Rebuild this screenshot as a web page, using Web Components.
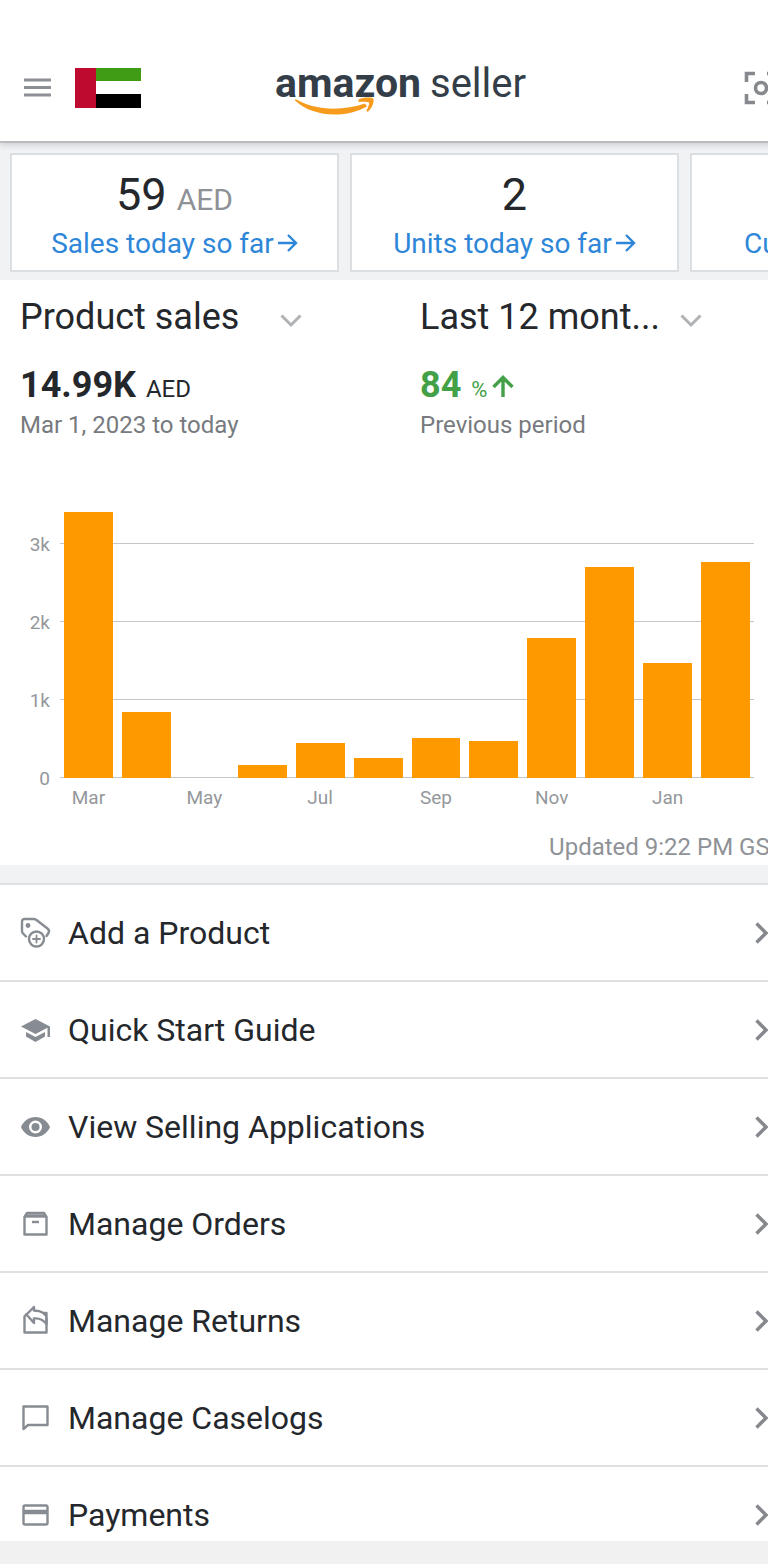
<!DOCTYPE html>
<html lang="en">
<head>
<meta charset="utf-8">
<meta name="viewport" content="width=device-width, initial-scale=1">
<title>Amazon Seller</title>
<style>
  html, body { margin: 0; height: 100%; }
  body { font-family: Roboto, "Liberation Sans", sans-serif; color: #24272b; background: #fff; overflow: hidden; }
</style>
</head>
<body>
<seller-app></seller-app>

<script>
function define(name, html, setup) {
  const template = document.createElement('template');
  template.innerHTML = html;
  customElements.define(name, class extends HTMLElement {
    constructor() {
      super();
      this.attachShadow({ mode: 'open' }).append(template.content.cloneNode(true));
    }
    connectedCallback() {
      if (setup && !this.ready) { this.ready = true; setup(this, this.shadowRoot); }
    }
  });
}

const ICONS = {
  tag: '<g fill="none" stroke="#878b92" stroke-width="2.400" stroke-linecap="round" stroke-linejoin="round"><path d="M6 19.500L3 16.500Q2 15.500 2 14V5Q2 2 5 2H13.500Q15 2 16.500 3L27.500 11.500Q30 13.500 28.500 16L26.500 19"/><circle cx="16.500" cy="22" r="7.500"/><path d="M16.500 18.500v7M13 22h7" stroke-width="1.800"/></g><circle cx="8" cy="8.500" r="2.400" fill="#878b92"/>',
  cap: '<g fill="#878b92"><path d="M15.500 5L1 12.500L15.500 20L27.500 13.800V23h2.500V12.500z"/><path d="M6 18v4.500L15.500 28L25 22.500V18l-9.500 5z"/></g>',
  eye: '<path fill="#878b92" fill-rule="evenodd" d="M15.500 6C9 6 3.500 10 1 16c2.500 6 8 10 14.500 10S27.500 22 30 16C27.500 10 22 6 15.500 6zm0 3.500a6.500 6.500 0 1 1 0 13a6.500 6.500 0 0 1 0-13z"/><circle cx="15.500" cy="16" r="4" fill="#878b92"/>',
  box: '<g fill="none" stroke="#878b92" stroke-width="2.400"><path d="M4.500 9v17.500h22V9L24 5H7z" stroke-linejoin="round"/><path d="M5 8h21" stroke-width="3.400"/><path d="M12 14h7"/></g>',
  returns: '<g fill="none" stroke="#878b92" stroke-width="2.400" stroke-linejoin="round"><path d="M7 8.500L4.500 11.500v16h22V13"/><path d="M14 2L6.500 9.500L14 18v-4.500c5-.500 9 1 12.500 5.500V8h-3c-3-2-5.500-2.500-9.500-2.500z"/></g><path d="M18 5.500l8.500 2.500v6c-2-4-5-6.500-8.500-8.500z" fill="#878b92"/>',
  chat: '<path d="M3.500 4.500h24v18.500H8l-4.500 4z" fill="none" stroke="#878b92" stroke-width="2.400" stroke-linejoin="round"/>',
  card: '<rect x="3.500" y="6.500" width="24" height="19" rx="1.500" fill="none" stroke="#878b92" stroke-width="2.400"/><path d="M3.500 13h24" stroke="#878b92" stroke-width="4.500"/>'
};

define('amazon-logo', `
  <style>
    :host { display: block; width: 252px; height: 64px; }
    svg { display: block; width: 100%; height: 100%; }
    text { font-family: Roboto, sans-serif; fill: #333e48; }
  </style>
  <svg viewBox="0 0 252 64" role="img" aria-label="amazon seller">
    <text x="0" y="41" font-size="41" font-weight="700">amazon</text>
    <text x="155" y="41" font-size="40">seller</text>
    <path d="M20.500 43C40 55 68 55 90 47.500L92 50.500C71 62.500 38 61.500 20 44.500z" fill="#f79b1c"/>
    <path d="M83.500 43.500C89 41 97.500 41 98.500 43C99 47.500 96.500 53 92.500 56L91.500 54.500C93.500 51 94.500 47.500 94 46.500C92.500 45.500 88 45.500 83.500 46z" fill="#f79b1c"/>
  </svg>`);

define('app-header', `
  <style>
    :host { display: block; position: relative; background: #fff; border-bottom: 2px solid #b9bbbd; box-shadow: 0 2px 6px rgba(60, 70, 80, .2); }
    header { display: grid; grid-template-columns: 1fr auto 1fr; align-items: center; padding: 56px 22px 21px 23px; }
    .left { display: flex; align-items: center; gap: 23px; }
    button { border: 0; padding: 0; background: none; display: block; }
    .scan { justify-self: end; }
    svg { display: block; }
  </style>
  <header>
    <div class="left">
      <button aria-label="Menu"><svg width="29" height="24" viewBox="0 0 29 24"><path d="M1 4h27M1 11.500h27M1 19h27" stroke="#8c9095" stroke-width="3"/></svg></button>
      <svg width="66" height="40" viewBox="0 0 66 40" role="img" aria-label="United Arab Emirates"><path fill="#3f9c14" d="M20 0h46v13H20z"/><path fill="#000" d="M20 26h46v14H20z"/><path fill="#bf0a30" d="M0 0h21v40H0z"/></svg>
    </div>
    <amazon-logo></amazon-logo>
    <button class="scan" aria-label="Scan"><svg width="34" height="34" viewBox="0 0 34 34" fill="none" stroke="#85898e" stroke-width="3.600"><path d="M2.500 11V2.500H11M23 2.500h8.500V11M31.500 23v8.500H23M11 31.500H2.500V23"/><circle cx="17" cy="17" r="5.500"/></svg></button>
  </header>`);

define('stat-card', `
  <style>
    :host { display: block; flex: 0 0 329px; box-sizing: border-box; border: 2px solid #dcdfe1; background: #fff; padding: 14px 8px 5px; text-align: center; white-space: nowrap; }
    .value { display: flex; justify-content: center; align-items: baseline; gap: 10px; height: 52px; line-height: 52px; font-size: 45px; }
    ::slotted([slot=unit]) { font-size: 30px; line-height: 32px; color: #8e9196; }
    a { display: flex; justify-content: center; align-items: center; gap: 4px; height: 44px; font-size: 28px; color: #2e86d8; text-decoration: none; }
    svg { display: block; }
  </style>
  <div class="value"><slot name="value"></slot><slot name="unit"></slot></div>
  <a href="#"><slot></slot><svg width="20" height="20" viewBox="0 0 20 20" fill="none" stroke="#2e86d8" stroke-width="2.400"><path d="M0 10h18M10 2l8 8l-8 8"/></svg></a>`);

define('metric-picker', `
  <style>
    :host { display: block; min-width: 0; }
    .pick { position: relative; width: 282px; }
    select { appearance: none; display: block; width: 100%; height: 44px; margin: 0; padding: 0; border: 0; background: none; font: 36px/44px Roboto, sans-serif; color: #24272b; }
    .pick svg { position: absolute; right: 0; top: 18px; pointer-events: none; }
    .value { display: flex; align-items: baseline; gap: 10px; height: 44px; margin-top: 24px; line-height: 32px; font-size: 24px; }
    ::slotted(b) { font-size: 36px; line-height: 44px; }
    .note { line-height: 32px; margin-top: 2px; font-size: 24px; color: #777a7e; }
  </style>
  <div class="pick">
    <select><option></option></select>
    <svg width="22" height="16" viewBox="0 0 22 16" fill="none" stroke="#b0b2b4" stroke-width="3"><path d="M1.500 2.500L11 12L20.500 2.500"/></svg>
  </div>
  <div class="value"><slot name="value"></slot></div>
  <div class="note"><slot></slot></div>`,
  (host, root) => {
    root.querySelector('option').textContent = host.getAttribute('option');
    root.querySelector('select').setAttribute('aria-label', host.getAttribute('label'));
  });

define('sales-chart', `
  <style>
    :host { display: grid; grid-template-columns: 50px minmax(0, 1fr); column-gap: 10px; grid-template-rows: 312px 39px; color: #94979b; }
    .y { grid-row: 1 / 3; display: grid; grid-template-rows: repeat(4, 78px); margin-top: 39px; align-items: center; text-align: right; font-size: 19px; }
    .plot { display: grid; grid-template: repeat(4, 78px) / minmax(0, 1fr); }
    .line { grid-column: 1; border-bottom: 1px solid #c4c6c8; }
    .line:nth-child(1) { grid-row: 1; }
    .line:nth-child(2) { grid-row: 2; }
    .line:nth-child(3) { grid-row: 3; }
    .line:nth-child(4) { grid-row: 4; }
    .bars, .x { display: grid; grid-template-columns: repeat(12, minmax(0, 1fr)); gap: 9px; padding: 0 4px; }
    .bars { grid-area: 1 / 1 / 5 / 2; grid-template-rows: 100%; align-items: end; }
    .bar { background: #ff9900; }
    .x { align-items: center; font-size: 19px; text-align: center; }
  </style>
  <div class="y"><span>3k</span><span>2k</span><span>1k</span><span>0</span></div>
  <div class="plot"><div class="line"></div><div class="line"></div><div class="line"></div><div class="line"></div><div class="bars"></div></div>
  <div class="x"></div>`,
  (host, root) => {
    const sales = [3410, 850, 0, 170, 450, 260, 510, 480, 1800, 2705, 1470, 2775];
    const months = ['Mar', '', 'May', '', 'Jul', '', 'Sep', '', 'Nov', '', 'Jan', ''];
    for (const amount of sales) {
      const bar = document.createElement('div');
      bar.className = 'bar';
      bar.style.height = amount / 40 + '%';
      root.querySelector('.bars').append(bar);
    }
    for (const month of months) {
      const label = document.createElement('span');
      label.textContent = month;
      root.querySelector('.x').append(label);
    }
  });

define('menu-row', `
  <style>
    :host { display: block; border-bottom: 2px solid #dfe0e2; }
    a { display: flex; align-items: center; gap: 16px; height: 95px; padding: 0 30px 0 20px; color: inherit; text-decoration: none; font-size: 32px; }
    .label { flex: 1; }
    svg { display: block; flex: none; }
  </style>
  <a href="#"><svg class="icon" width="32" height="32" viewBox="0 0 32 32" aria-hidden="true"></svg><span class="label"><slot></slot></span>
  <svg width="16" height="24" viewBox="0 0 16 24" fill="none" stroke="#85888c" stroke-width="3.400"><path d="M2.500 2.500L12 12L2.500 21.500"/></svg></a>`,
  (host, root) => { root.querySelector('.icon').innerHTML = ICONS[host.getAttribute('icon')]; });

define('seller-app', `
  <style>
    :host { display: flex; flex-direction: column; height: 100vh; overflow: hidden; }
    /* The canvas runs a little wider than the viewport. */
    .canvas { flex: 1; min-height: 0; width: calc(100% + 32px); overflow: hidden; }
    .stats { display: flex; gap: 11px; padding: 10px 10px 8px; background: #f0f2f4; overflow: hidden; }
    .sales { padding-top: 15px; }
    .metrics { display: grid; grid-template-columns: 1fr 1fr; }
    metric-picker { padding-left: 20px; }
    sales-chart { margin: 25px 46px 0 0; }
    .updated { margin: 12px 16px 0 0; line-height: 36px; font-size: 24px; text-align: right; color: #8f9297; }
    nav { border-top: 2px solid #dfe0e2; }
    .band { height: 18px; background: #f1f2f4; }
    .up { color: #43a047; }
    .pct { font-size: 22px; color: #43a047; }
    .trend { display: block; margin-left: -5px; }
    footer { height: 23px; background: #f1f1f1; }
  </style>
  <div class="canvas">
    <app-header></app-header>
    <div class="stats">
      <stat-card><span slot="value">59</span><span slot="unit">AED</span>Sales today so far</stat-card>
      <stat-card><span slot="value">2</span>Units today so far</stat-card>
      <stat-card>Current balance</stat-card>
    </div>
    <section class="sales">
      <div class="metrics">
        <metric-picker label="Metric" option="Product sales"><b slot="value">14.99K</b><span slot="value">AED</span>Mar 1, 2023 to today</metric-picker>
        <metric-picker label="Period" option="Last 12 mont..."><b slot="value" class="up">84</b><span slot="value" class="pct">%</span><svg slot="value" class="trend" width="22" height="22" viewBox="0 0 22 22" fill="none" stroke="#43a047" stroke-width="3.400"><path d="M11 22V3M1.500 12L11 2.500L20.500 12"/></svg>Previous period</metric-picker>
      </div>
      <sales-chart></sales-chart>
      <div class="updated">Updated 9:22 PM GST</div>
    </section>
    <div class="band"></div>
    <nav>
      <menu-row icon="tag">Add a Product</menu-row>
      <menu-row icon="cap">Quick Start Guide</menu-row>
      <menu-row icon="eye">View Selling Applications</menu-row>
      <menu-row icon="box">Manage Orders</menu-row>
      <menu-row icon="returns">Manage Returns</menu-row>
      <menu-row icon="chat">Manage Caselogs</menu-row>
      <menu-row icon="card">Payments</menu-row>
    </nav>
  </div>
  <footer></footer>`);
</script>
</body>
</html>
